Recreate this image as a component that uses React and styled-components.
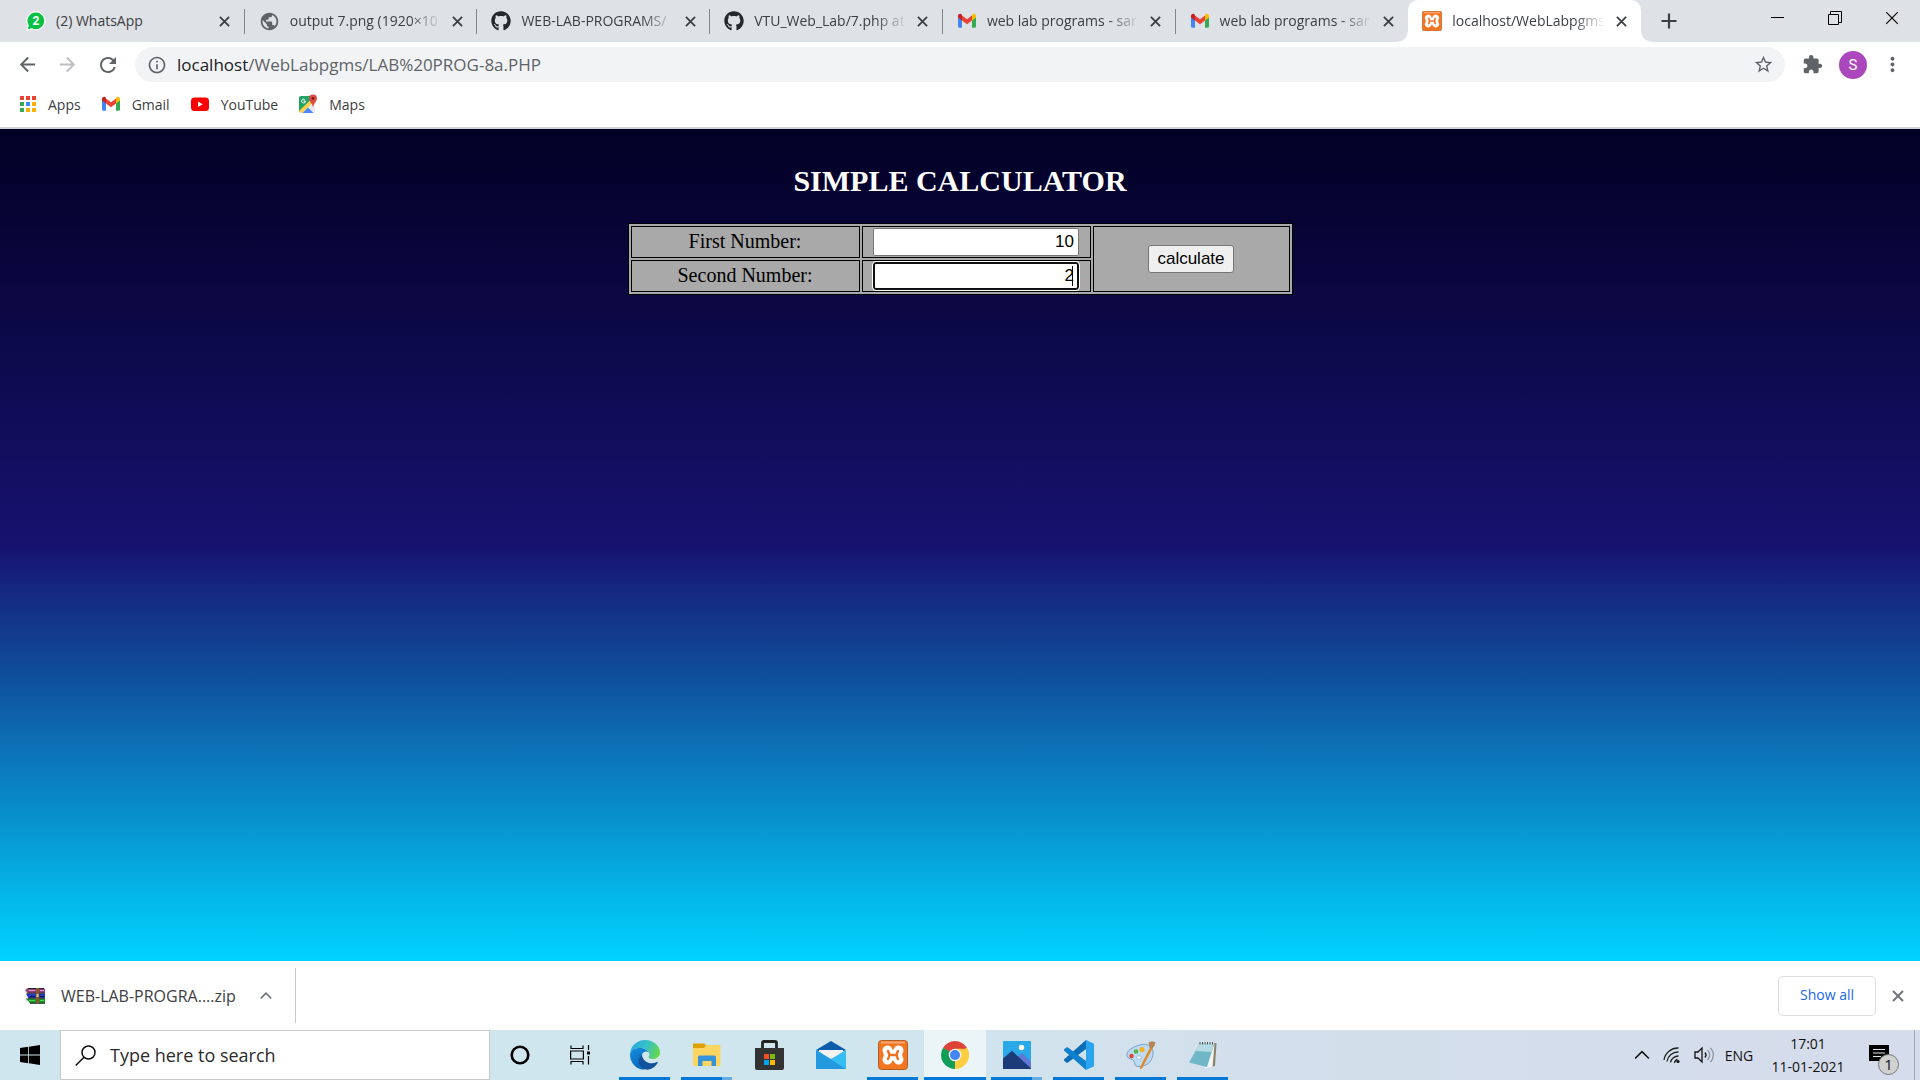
import React from "react";
import styled, { createGlobalStyle, css } from "styled-components";
import { FaGithub } from "react-icons/fa";
import {
  MdPublic,
  MdArrowBack,
  MdArrowForward,
  MdRefresh,
  MdInfoOutline,
  MdStarBorder,
  MdExtension,
  MdMoreVert,
} from "react-icons/md";

const GlobalStyle = createGlobalStyle`
  *, *::before, *::after { box-sizing: border-box; }
  body { margin: 0; font-family: "Open Sans", "Noto Sans", sans-serif; }
  button { font: inherit; color: inherit; background: none; border: 0; padding: 0; margin: 0; }
  a { color: inherit; text-decoration: none; }
  svg { display: block; flex: none; }
`;

const Shell = styled.div`
  display: flex;
  flex-direction: column;
  min-height: 100vh;
`;

/* ---------- tab strip ---------- */
const TabStrip = styled.header`
  display: flex;
  height: 42px;
  background: #dee1e6;
`;

const Tabs = styled.nav`
  display: flex;
  flex: 0 1 1641px;
  min-width: 0;
  padding-left: 12px;
`;

const Tab = styled.div`
  position: relative;
  display: flex;
  flex: 1 1 0;
  min-width: 0;
  align-items: center;
  gap: 10px;
  padding: 0 14px;
  font-size: 14px;
  color: #3c4043;
  ${(p) =>
    p.$active
      ? css`
          background: #fff;
          border-radius: 10px 10px 0 0;
          &::before,
          &::after {
            content: "";
            position: absolute;
            bottom: 0;
            width: 10px;
            height: 10px;
          }
          &::before {
            right: 100%;
            background: radial-gradient(circle at 0 0, transparent 9px, #fff 10px);
          }
          &::after {
            left: 100%;
            background: radial-gradient(circle at 100% 0, transparent 9px, #fff 10px);
          }
        `
      : css`
          &:nth-last-child(n + 3)::after {
            content: "";
            position: absolute;
            right: 0;
            top: 9px;
            width: 1px;
            height: 25px;
            background: #80868b;
          }
        `}
`;

const TabTitle = styled.a`
  flex: 1;
  min-width: 0;
  overflow: hidden;
  white-space: nowrap;
  line-height: 24px;
  mask-image: ${(p) => (p.$fade ? "linear-gradient(90deg, #000 calc(100% - 32px), transparent)" : "none")};
`;

const IconButton = styled.button`
  display: flex;
  align-items: center;
  justify-content: center;
  flex: none;
  width: ${(p) => p.$w || 20}px;
  height: ${(p) => p.$h || 20}px;
  color: ${(p) => p.$color || "#3c4043"};
`;

const WindowControls = styled.div`
  display: flex;
  margin-left: auto;
`;

/* ---------- toolbar ---------- */
const Toolbar = styled.div`
  display: flex;
  align-items: center;
  height: 45px;
  padding: 0 9px 0 7px;
  background: #fff;
`;

const NavButtons = styled.div`
  display: flex;
  width: 128px;
`;

const Omnibox = styled.div`
  display: flex;
  flex: 1;
  align-items: center;
  gap: 10px;
  height: 35px;
  padding: 0 12px;
  border-radius: 18px;
  background: #f1f3f4;
  color: #5f6368;
`;

const Url = styled.a`
  flex: 1;
  font-size: 17px;
  line-height: 24px;
  b {
    font-weight: 400;
    color: #202124;
  }
`;

const ToolbarActions = styled.div`
  display: flex;
  align-items: center;
  padding-left: 6px;
`;

const Avatar = styled.button`
  width: 28px;
  height: 28px;
  margin: 0 6px;
  border-radius: 50%;
  background: #ab47bc;
  color: #fff;
  font-family: Roboto, sans-serif;
  font-size: 15px;
`;

const Bookmarks = styled.nav`
  display: flex;
  align-items: center;
  gap: 20px;
  height: 42px;
  padding: 0 19px 6px;
  border-bottom: 2px solid #d0d2d6;
  font-size: 14px;
  color: #3c4043;
`;

const Bookmark = styled.a`
  display: flex;
  align-items: center;
  gap: 11px;
`;

/* ---------- page ---------- */
const Page = styled.main`
  display: flex;
  flex-direction: column;
  align-items: center;
  flex: 1;
  padding-top: 35px;
  background: linear-gradient(180deg, #020024 0%, #17126f 50%, #00d4ff 100%);
  font-family: "Liberation Serif", serif;
`;

const Heading = styled.h2`
  margin: 0 0 25px;
  font-size: 30px;
  line-height: 34px;
  font-weight: 700;
  color: #fff;
`;

const CalcTable = styled.table`
  width: 665px;
  table-layout: fixed;
  border: 1px solid #000;
  border-spacing: 2px;
  background: #a9a9a9;
  font-size: 20px;
  color: #000;
`;

const Cell = styled.td`
  height: 32px;
  padding: 0;
  border: 1px solid #000;
  text-align: center;
  vertical-align: middle;
  line-height: 24px;
`;

const FieldLabel = styled.label`
  display: block;
  padding-bottom: 2px;
`;

const Field = styled.div`
  position: relative;
  width: 206px;
  margin: 0 auto;
`;

const NumberInput = styled.input`
  display: block;
  width: 100%;
  height: 28px;
  padding: 0 4px;
  border: 1px solid #767676;
  border-radius: 2px;
  background: #fff;
  font-family: "Liberation Sans", sans-serif;
  font-size: 17px;
  text-align: right;
  color: #000;
  ${(p) =>
    p.$active &&
    css`
      padding: 0 3px;
      border: 2px solid #101010;
      border-radius: 3px;
      outline: 1px solid #fff;
    `}
`;

const Caret = styled.span`
  position: absolute;
  right: 6px;
  top: 4px;
  width: 1px;
  height: 20px;
  background: #000;
`;

const CalcButton = styled.button`
  height: 28px;
  width: 86px;
  border: 1px solid #767676;
  border-radius: 3px;
  background: #efefef;
  font-family: "Liberation Sans", sans-serif;
  font-size: 17px;
  color: #000;
`;

/* ---------- downloads ---------- */
const Downloads = styled.section`
  display: flex;
  align-items: center;
  height: 69px;
  padding: 0 12px 0 25px;
  background: #fff;
  color: #3c4043;
`;

const DownloadItem = styled.div`
  display: flex;
  align-items: center;
  width: 271px;
  height: 55px;
  border-right: 1px solid #c4c7cb;
  font-size: 16px;
  a {
    flex: 1;
    padding-left: 16px;
    white-space: nowrap;
  }
`;

const ShowAll = styled.button`
  width: 98px;
  height: 40px;
  margin: 0 12px 0 auto;
  padding-bottom: 2px;
  border: 1px solid #dadce0;
  border-radius: 5px;
  color: #1a67e8;
  font-size: 14px;
  font-weight: 500;
`;

/* ---------- task bar ---------- */
const Taskbar = styled.footer`
  display: flex;
  height: 50px;
  background: linear-gradient(90deg, #cfe6ee 0%, #d0e6ee 45%, #d3dfec 65%, #d5dceb 100%);
  color: #111;
`;

const SearchBox = styled.label`
  display: flex;
  align-items: center;
  width: 430px;
  height: 50px;
  padding-left: 14px;
  gap: 14px;
  border: 1px solid #c6c8ca;
  background: #fff;
  input {
    flex: 1;
    min-width: 0;
    padding: 0;
    border: 0;
    font-family: inherit;
    font-size: 18px;
    color: #222;
  }
  input::placeholder {
    color: #2b2b2b;
    opacity: 1;
  }
`;

const TaskApps = styled.div`
  display: flex;
  padding-left: 4px;
`;

const TaskApp = styled.button`
  display: flex;
  align-items: center;
  justify-content: center;
  position: relative;
  width: 62px;
  height: 50px;
  background: ${(p) => (p.$active ? "#ebf4f7" : "none")};
  ${(p) =>
    p.$running &&
    css`
      &::after {
        content: "";
        position: absolute;
        bottom: 0;
        left: ${p.$active ? 0 : 5}px;
        right: ${p.$active ? 0 : 6}px;
        height: 3px;
        background: ${p.$stacked ? "linear-gradient(90deg, #0078d7 80%, #66abe3 80%)" : "#0078d7"};
      }
    `}
`;

const Tray = styled.div`
  display: flex;
  align-items: center;
  margin-left: auto;
  font-size: 14px;
`;

const Clock = styled.time`
  width: 106px;
  text-align: center;
  line-height: 23px;
`;

const Language = styled.button`
  width: 32px;
  text-align: center;
`;

const Notices = styled.button`
  position: relative;
  width: 54px;
  height: 50px;
  border-right: 1px solid #a3abb5;
  margin-right: 5px;
  padding-left: 8px;
`;

const Count = styled.span`
  position: absolute;
  left: 17px;
  top: 24px;
  width: 21px;
  height: 21px;
  border: 1px solid #777;
  border-radius: 50%;
  background: #d0d0d0;
  font-size: 15px;
  line-height: 19px;
`;

/* ---------- drawings ---------- */
const Cross = ({ size = 11, w = 2 }) => (
  <svg width={size} height={size} viewBox="0 0 12 12" stroke="currentColor" strokeWidth={w}>
    <path d="M1 1l10 10M11 1L1 11" />
  </svg>
);

const WhatsAppIcon = () => (
  <svg width="20" height="20" viewBox="0 0 20 20">
    <path d="M10 .8a9 9 0 1 1-4.3 17L.8 19.2l1.4-4.7A9 9 0 0 1 10 .8z" fill="#0ac143" stroke="#fff" strokeWidth="1.2" />
    <text x="10" y="14.2" textAnchor="middle" fill="#fff" fontSize="12" fontWeight="700" fontFamily="Roboto, sans-serif">2</text>
  </svg>
);

const GmailIcon = () => (
  <svg width="20" height="20" viewBox="0 0 20 20">
    <path d="M1 5.5v9.700a1.600 1.600 0 0 0 1.600 1.600H5V8.500z" fill="#4285f4" />
    <path d="M19 5.500v9.700a1.600 1.600 0 0 1-1.600 1.600H15V8.500z" fill="#34a853" />
    <path d="M15 4.600v4.800l4-3V5c0-1.900-2.100-2.900-3.500-1.800z" fill="#fbbc04" />
    <path d="M5 9.400V4.500l5 3.800 5-3.800v4.900l-5 3.800z" fill="#ea4335" />
    <path d="M1 5v1.400l4 3V4.500l-.5-1.300C3.100 2.100 1 3.100 1 5z" fill="#c5221f" />
  </svg>
);

const AppsIcon = () => {
  const colors = ["#ea4335", "#ea4335", "#ea4335", "#34a853", "#4285f4", "#fbae04", "#34a853", "#fbae04", "#fbae04"];
  return (
    <svg width="18" height="18" viewBox="0 0 18 18">
      {colors.map((c, i) => (
        <rect key={i} x={1 + (i % 3) * 6} y={1 + Math.floor(i / 3) * 6} width="4" height="4" fill={c} />
      ))}
    </svg>
  );
};

const YouTubeIcon = () => (
  <svg width="20" height="18" viewBox="0 0 20 18">
    <rect x="1" y="2.500" width="18" height="13.500" rx="3.500" fill="#f00" />
    <path d="M8 6.500v5.500l4.700-2.700z" fill="#fff" />
  </svg>
);

const MapsIcon = () => (
  <svg width="20" height="20" viewBox="0 0 20 20">
    <rect x="1" y="2" width="16" height="17" rx="2" fill="#e8eaed" />
    <path d="M3 2h10v5L2 17.500 1 17V4a2 2 0 0 1 2-2z" fill="#1fa463" />
    <path d="M1.500 16.500L13 5.500l2.500 2.500L4 19H3a2 2 0 0 1-1.500-2.500z" fill="#ffd147" />
    <path d="M4.500 19L10 13.500l5.500 5.500z" fill="#4a89f3" />
    <path d="M6.800 5.700A1.900 1.900 0 1 0 7.400 7H5.500" fill="none" stroke="#fff" strokeWidth="1" />
    <path d="M15 .5a4 4 0 0 1 4 4c0 3-3.400 4.500-4 9-.6-4.500-4-6-4-9a4 4 0 0 1 4-4z" fill="#dc4b3e" />
    <circle cx="15" cy="4.500" r="1.400" fill="#7b231e" />
  </svg>
);

const XamppIcon = ({ size = 20 }) => (
  <svg width={size} height={size} viewBox="0 0 30 30">
    <rect x="0.500" y="0.500" width="29" height="29" rx="3" fill="#f37623" stroke="#b35c22" />
    <path d="M3 1.500h24v2H3z" fill="#f5a56d" />
    <g fill="none" strokeLinecap="round" strokeLinejoin="round">
      <path d="M9.500 10.500Q12.500 15 9.500 19.500M20.500 10.500Q17.500 15 20.500 19.500" stroke="#fff" strokeWidth="10" />
      <path d="M11 15h8" stroke="#fff" strokeWidth="7" />
      <path d="M10 11Q12.500 15 10 19M20 11Q17.500 15 20 19M11.500 15h7" stroke="#ef7324" strokeWidth="2.400" />
    </g>
  </svg>
);

const ArchiveIcon = () => (
  <svg width="20" height="16" viewBox="0 0 20 16">
    <path d="M0 2l3-2h16l1 1.500V5H2z" fill="#8c3f78" />
    <path d="M0 2l3 3v1L0 4z" fill="#d8c6b0" />
    <path d="M1 5.500h19V10H3z" fill="#2438c8" />
    <path d="M0 6l3 3v1L0 8z" fill="#e5e5e5" />
    <path d="M1 10.500h19V15H5L1 12.500z" fill="#1d8a2d" />
    <path d="M0 10l4 3.500V15L0 12z" fill="#ddd" />
    <path d="M2 5.200h18M3 10.200h17M5 15.300h15M3 .5h16" stroke="#222" />
    <path d="M11 0h3v15h-3z" fill="#8a5a26" />
    <path d="M11.500 6h2v3h-2z" fill="#e2c36a" />
    <path d="M4 2.500h6M15 2.500h4" stroke="#e09ad0" />
    <path d="M5 8.500h5M15 8.500h4" stroke="#111a50" />
    <path d="M4 12.500h6M15 12.500h4" stroke="#3be04b" />
  </svg>
);

const Chevron = ({ width = 12, w = 2 }) => (
  <svg width={width} height={width * 0.6} viewBox="0 0 15 9" fill="none" stroke="currentColor" strokeWidth={w}>
    <path d="M1 8l6.500-6.500L14 8" />
  </svg>
);

const WindowsIcon = () => (
  <svg width="20" height="20" viewBox="0 0 20 20" fill="#000">
    <path d="M0 2.900L8.200 1.800v7.700H0zM9 1.700L20 0v9.500H9zM0 10.400h8.200v7.800L0 17zM9 10.400h11V20L9 18.300z" />
  </svg>
);

const SearchIcon = () => (
  <svg width="21" height="21" viewBox="0 0 21 21" fill="none" stroke="#111" strokeWidth="1.500">
    <circle cx="13.500" cy="7.500" r="6.500" />
    <path d="M9 12.200L.7 20.500" />
  </svg>
);

const CortanaIcon = () => (
  <svg width="20" height="20" viewBox="0 0 20 20">
    <circle cx="10" cy="10" r="8.300" fill="none" stroke="#000" strokeWidth="2.600" />
  </svg>
);

const TaskViewIcon = () => (
  <svg width="21" height="20" viewBox="0 0 21 20" fill="none" stroke="#000" strokeWidth="1.200">
    <path d="M1 .5v3h12v-3M1 19.500v-3h12v3M.6 6h12.800v8H.6zM18.500 0v5M18.500 11v8.500" />
    <path d="M17 6.500h3v3h-3z" fill="#000" stroke="none" />
  </svg>
);

const EdgeIcon = () => (
  <svg width="30" height="30" viewBox="0 0 30 30">
    <defs>
      <linearGradient id="edgeTop" x1="0" y1="0.300" x2="1" y2="0.600">
        <stop offset="0" stopColor="#2aa9e0" />
        <stop offset="0.500" stopColor="#35c1c8" />
        <stop offset="1" stopColor="#66d94a" />
      </linearGradient>
      <linearGradient id="edgeSide" x1="0" y1="0" x2="0.600" y2="1">
        <stop offset="0" stopColor="#1191e0" />
        <stop offset="1" stopColor="#0c62b4" />
      </linearGradient>
    </defs>
    <path d="M.2 13C1 5.500 7.200 0 15 0c8.500 0 15 6 15 12.500 0 4-3 6.500-7 6.500-3.500 0-5-1.200-4.300-2.500.8-1.200.9-2 .5-3.500C18.300 10 14 8 9.500 8 5 8 1.500 10 .2 13z" fill="url(#edgeTop)" />
    <path d="M.1 14C.8 10 4.500 8 9.500 8c4.500 0 8 2 9.300 4.500-2.500-2-6.300-.8-6.800 2.500-1 6 4.500 10.500 8 11-1 1.500-5 4-8 3.500C4.500 28-.5 21 .1 14z" fill="url(#edgeSide)" />
    <path d="M12 15c-3 2-4.500 6-2.500 9.500 2 3.500 6 5.800 9.500 5 4-1 7-3.500 8.700-6.800.3-.7-.2-1-.8-.7C20.500 25.500 12.500 21.500 12 15z" fill="#10529c" />
  </svg>
);

const FolderIcon = () => (
  <svg width="28" height="26" viewBox="0 0 28 26">
    <path d="M0 1.500h11.500L13.500 4H27v6H0z" fill="#dfa000" />
    <path d="M0 6h11l2-3h13.500a1 1 0 0 1 1 1v19a1 1 0 0 1-1 1H1a1 1 0 0 1-1-1z" fill="#ffd562" />
    <path d="M5 24V15a1.500 1.500 0 0 1 1.500-1.500h15A1.500 1.500 0 0 1 23 15v9h-4.500v-5h-9v5z" fill="#3894d8" />
  </svg>
);

const StoreIcon = () => (
  <svg width="29" height="30" viewBox="0 0 29 30">
    <path d="M7.500 9V3A1.500 1.500 0 0 1 9 1.500h11A1.500 1.500 0 0 1 21.500 3v6" fill="none" stroke="#222" strokeWidth="2.800" />
    <path d="M0 8h29v20a2 2 0 0 1-2 2H2a2 2 0 0 1-2-2z" fill="#333" />
    <path d="M9 14h5v5H9z" fill="#f25022" />
    <path d="M15 14h5v5h-5z" fill="#7fba00" />
    <path d="M9 20h5v5H9z" fill="#00a4ef" />
    <path d="M15 20h5v5h-5z" fill="#ffb900" />
  </svg>
);

const MailIcon = () => (
  <svg width="30" height="30" viewBox="0 0 30 30">
    <path d="M0 10L15 1l15 9-15 6z" fill="#0b5cab" />
    <path d="M3 10h24v8H3z" fill="#f2f2f2" />
    <path d="M0 10l15 9L30 10v19H0z" fill="#36bdf2" />
    <path d="M0 10l30 19H0z" fill="#2399e0" />
  </svg>
);

const ChromeIcon = () => (
  <svg width="28" height="28" viewBox="0 0 28 28">
    <path d="M14 14L1.900 7A14 14 0 0 1 26.100 7z" fill="#db4437" />
    <path d="M14 14L26.100 7A14 14 0 0 1 14 28z" fill="#ffcd40" />
    <path d="M14 14L14 28A14 14 0 0 1 1.900 7z" fill="#0f9d58" />
    <path d="M14 7.700h12.400A14 14 0 0 1 14 28l5.500-10.800z" fill="#ffcd40" />
    <path d="M1.900 7l6.600 10.200L14 14z" fill="#0f9d58" />
    <circle cx="14" cy="14" r="6.300" fill="#f1f1f1" />
    <circle cx="14" cy="14" r="5" fill="#4285f4" />
  </svg>
);

const PhotosIcon = () => (
  <svg width="28" height="28" viewBox="0 0 28 28">
    <rect width="28" height="28" rx="1" fill="#29a9e8" />
    <path d="M11 20l8-8 9 8.500V28H11z" fill="#5d78d5" />
    <path d="M0 17.500L9 9.800l19 17.700v.5H0z" fill="#1b3c78" />
    <circle cx="18.500" cy="6.500" r="2.700" fill="#fff" />
  </svg>
);

const CodeIcon = () => (
  <svg width="30" height="30" viewBox="0 0 30 30">
    <path d="M22 0v9L4 22.500a1.500 1.500 0 0 1-1.800 0L.5 21a1.300 1.300 0 0 1 0-2z" fill="#0a6db5" />
    <path d="M22 30v-9L4 7.500a1.500 1.500 0 0 0-1.800 0L.5 9a1.300 1.300 0 0 0 0 2z" fill="#1081cc" />
    <path d="M22 0l7 3.300a1.500 1.500 0 0 1 1 1.500v20.400a1.500 1.500 0 0 1-1 1.500L22 30z" fill="#28a4f0" />
  </svg>
);

const PaintIcon = () => (
  <svg width="30" height="30" viewBox="0 0 30 30">
    <path d="M14 5c8-2.500 14 2 13 9.500-1 8-8 12.500-15 12-4-.4-3-3.500-4-5.500-1.500-2.500-6-1.500-7-5C0 11 6 7 14 5z" fill="#b9daf1" stroke="#7aa2c8" />
    <circle cx="5.500" cy="16" r="2.200" fill="#e0413c" />
    <circle cx="10" cy="11.500" r="2.300" fill="#54b848" />
    <circle cx="16" cy="9.500" r="2.600" fill="#fbb01c" />
    <ellipse cx="13" cy="17.500" rx="2.500" ry="1.600" fill="#fff" stroke="#7aa2c8" strokeWidth="0.600" />
    <path d="M24 7.500l2.500 1-10.500 20-2.200.5.300-2z" fill="#e08a2c" />
    <path d="M22.500 2.500L26 1.300l3.500 1-1 3.500L26 9l-2.500-1.500z" fill="#b58454" />
  </svg>
);

const NotepadIcon = () => (
  <svg width="30" height="28" viewBox="0 0 30 28">
    <path d="M14 2h14.500L27 25l-9 2z" fill="#8c8467" />
    <path d="M26.500 3L24.500 26l-8 1.500z" fill="#f4f6f6" />
    <path d="M12 2h14.500L19 26 1 21.500z" fill="#6fb7c6" />
    <path d="M12 2h14.500l-3 9L7.500 10z" fill="#b5dbe4" />
    <path d="M12 1v2.500M14.500 1v2.500M17 1v2.500M19.500 1v2.500M22 1v2.500M24.500 1v2.500" stroke="#555" />
  </svg>
);

const WifiIcon = () => (
  <svg width="18" height="18" viewBox="0 0 18 18" fill="none" stroke="#222" strokeWidth="1.300">
    <path d="M1 14A14 14 0 0 1 15.500 2M4 15.500A11 11 0 0 1 15.500 6M7.500 16.500a8 8 0 0 1 8-6.500" />
    <path d="M11.500 17a4 4 0 0 1 3-3.500" />
    <circle cx="15" cy="15.500" r="1.600" fill="#111" stroke="none" />
  </svg>
);

const SpeakerIcon = () => (
  <svg width="22" height="18" viewBox="0 0 22 18" fill="none" stroke="#111" strokeWidth="1.300">
    <path d="M1 6h3l4-4v14l-4-4H1z" />
    <path d="M11 6.500a4 4 0 0 1 0 5" />
    <path d="M13.500 4a7 7 0 0 1 0 10M16.500 2a10 10 0 0 1 0 14" stroke="#8a929c" />
  </svg>
);

const NoticeIcon = () => (
  <svg width="20" height="20" viewBox="0 0 20 20">
    <path d="M0 0h20v16h-7l-3 4v-4H0z" fill="#000" />
    <path d="M4 4.500h12M4 8h12M4 11.500h8" stroke="#dfe6f0" strokeWidth="1.200" />
  </svg>
);

const GithubIcon = () => <FaGithub size={20} color="#24292e" />;

const TABS = [
  { title: "(2) WhatsApp", icon: <WhatsAppIcon /> },
  { title: "output 7.png (1920×10", icon: <MdPublic size={21} color="#5f6368" />, fade: true },
  { title: "WEB-LAB-PROGRAMS/", icon: <GithubIcon />, fade: true },
  { title: "VTU_Web_Lab/7.php at", icon: <GithubIcon />, fade: true },
  { title: "web lab programs - sar", icon: <GmailIcon />, fade: true },
  { title: "web lab programs - sar", icon: <GmailIcon />, fade: true },
  { title: "localhost/WebLabpgms", icon: <XamppIcon />, fade: true, active: true },
];

const BOOKMARKS = [
  { name: "Apps", icon: <AppsIcon /> },
  { name: "Gmail", icon: <GmailIcon /> },
  { name: "YouTube", icon: <YouTubeIcon /> },
  { name: "Maps", icon: <MapsIcon /> },
];

const APPS = [
  { name: "Edge", icon: <EdgeIcon />, running: true },
  { name: "File Explorer", icon: <FolderIcon />, running: true, stacked: true },
  { name: "Store", icon: <StoreIcon /> },
  { name: "Mail", icon: <MailIcon /> },
  { name: "XAMPP", icon: <XamppIcon size={30} />, running: true },
  { name: "Chrome", icon: <ChromeIcon />, running: true, active: true },
  { name: "Photos", icon: <PhotosIcon />, running: true, stacked: true },
  { name: "Code", icon: <CodeIcon />, running: true },
  { name: "Paint", icon: <PaintIcon />, running: true },
  { name: "Notepad", icon: <NotepadIcon />, running: true },
];

export default function App() {
  return (
    <Shell>
      <GlobalStyle />
      <TabStrip>
        <Tabs>
          {TABS.map((t, i) => (
            <Tab key={i} $active={t.active}>
              {t.icon}
              <TabTitle href="#" $fade={t.fade}>{t.title}</TabTitle>
              <IconButton $w={12} aria-label="Close tab"><Cross /></IconButton>
            </Tab>
          ))}
        </Tabs>
        <IconButton $w={56} $h={42} aria-label="New tab">
          <svg width="16" height="16" viewBox="0 0 16 16" stroke="currentColor" strokeWidth="2.200">
            <path d="M8 .5v15M.5 8h15" />
          </svg>
        </IconButton>
        <WindowControls>
          <IconButton $w={57} $h={36} aria-label="Minimize">
            <svg width="14" height="14" viewBox="0 0 14 14" stroke="#000"><path d="M0 6.500h13" /></svg>
          </IconButton>
          <IconButton $w={57} $h={36} aria-label="Restore">
            <svg width="14" height="14" viewBox="0 0 14 14" fill="none" stroke="#000">
              <path d="M.5 3.500h10v10H.5zM2.500 3.500v-3h11v11h-3" />
            </svg>
          </IconButton>
          <IconButton $w={57} $h={36} $color="#000" aria-label="Close"><Cross size={14} w={1} /></IconButton>
        </WindowControls>
      </TabStrip>

      <Toolbar>
        <NavButtons>
          <IconButton $w={40} $h={36} $color="#5f6368" aria-label="Back"><MdArrowBack size={23} /></IconButton>
          <IconButton $w={40} $h={36} $color="#bcbec1" aria-label="Forward"><MdArrowForward size={23} /></IconButton>
          <IconButton $w={42} $h={36} $color="#5f6368" aria-label="Reload"><MdRefresh size={24} /></IconButton>
        </NavButtons>
        <Omnibox>
          <MdInfoOutline size={20} />
          <Url href="#"><b>localhost</b>/WebLabpgms/LAB%20PROG-8a.PHP</Url>
          <IconButton $color="#5f6368" aria-label="Bookmark this page"><MdStarBorder size={21} /></IconButton>
        </Omnibox>
        <ToolbarActions>
          <IconButton $w={42} $h={36} $color="#5f6368" aria-label="Extensions"><MdExtension size={21} /></IconButton>
          <Avatar>S</Avatar>
          <IconButton $w={38} $h={36} $color="#5f6368" aria-label="Menu"><MdMoreVert size={23} /></IconButton>
        </ToolbarActions>
      </Toolbar>
      <Bookmarks>
        {BOOKMARKS.map((b) => (
          <Bookmark key={b.name} href="#">{b.icon}{b.name}</Bookmark>
        ))}
      </Bookmarks>

      <Page>
        <Heading>SIMPLE CALCULATOR</Heading>
        <CalcTable>
          <colgroup>
            <col style={{ width: 229 }} />
            <col style={{ width: 229 }} />
            <col />
          </colgroup>
          <tbody>
            <tr>
              <Cell><FieldLabel htmlFor="first">First Number:</FieldLabel></Cell>
              <Cell><Field><NumberInput id="first" defaultValue="10" /></Field></Cell>
              <Cell rowSpan={2}><CalcButton>calculate</CalcButton></Cell>
            </tr>
            <tr>
              <Cell><FieldLabel htmlFor="second">Second Number:</FieldLabel></Cell>
              <Cell><Field><NumberInput id="second" defaultValue="2" $active /><Caret /></Field></Cell>
            </tr>
          </tbody>
        </CalcTable>
      </Page>

      <Downloads>
        <DownloadItem>
          <ArchiveIcon />
          <a href="#">WEB-LAB-PROGRA....zip</a>
          <IconButton $w={58} $h={40} $color="#70757a" aria-label="Download options"><Chevron /></IconButton>
        </DownloadItem>
        <ShowAll>Show all</ShowAll>
        <IconButton $color="#70757a" aria-label="Close downloads"><Cross size={12} /></IconButton>
      </Downloads>

      <Taskbar>
        <IconButton $w={60} $h={50} aria-label="Start"><WindowsIcon /></IconButton>
        <SearchBox>
          <SearchIcon />
          <input placeholder="Type here to search" aria-label="Search" />
        </SearchBox>
        <IconButton $w={60} $h={50} aria-label="Cortana"><CortanaIcon /></IconButton>
        <IconButton $w={60} $h={50} aria-label="Task View"><TaskViewIcon /></IconButton>
        <TaskApps>
          {APPS.map((a) => (
            <TaskApp key={a.name} aria-label={a.name} $running={a.running} $stacked={a.stacked} $active={a.active}>
              {a.icon}
            </TaskApp>
          ))}
        </TaskApps>
        <Tray>
          <IconButton $w={30} $h={50} $color="#111" aria-label="Hidden icons"><Chevron width={16} w={1.4} /></IconButton>
          <IconButton $w={30} $h={50} aria-label="Network"><WifiIcon /></IconButton>
          <IconButton $w={36} $h={50} aria-label="Volume"><SpeakerIcon /></IconButton>
          <Language>ENG</Language>
          <Clock>17:01<br />11-01-2021</Clock>
          <Notices aria-label="Notifications"><NoticeIcon /><Count>1</Count></Notices>
        </Tray>
      </Taskbar>
    </Shell>
  );
}
